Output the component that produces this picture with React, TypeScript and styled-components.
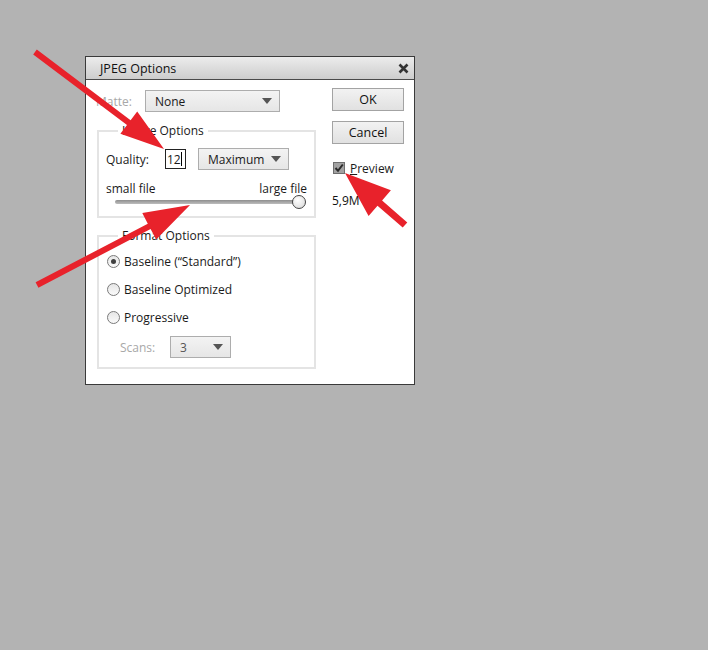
import React from "react";
import styled, { createGlobalStyle } from "styled-components";

const Global = createGlobalStyle`
  html, body { margin: 0; padding: 0; background: #b3b3b3; }
  body { width: 708px; height: 650px; overflow: hidden; font-family: "Open Sans", "Liberation Sans", sans-serif; font-size: 12px; color: #1a1a1a; }
`;

const Page = styled.div`
  position: relative;
  width: 708px;
  height: 650px;
  padding: 56px 0 0 85px;
  box-sizing: border-box;
`;

const Dialog = styled.div`
  width: 330px;
  box-sizing: border-box;
  border: 1px solid #3a3a3a;
  background: #ffffff;
  display: flex;
  flex-direction: column;
`;

const TitleBar = styled.div`
  height: 22px;
  display: flex;
  align-items: center;
  justify-content: space-between;
  padding: 0 5px 0 14px;
  background: linear-gradient(#ececec, #cdcdcd);
  border-bottom: 1px solid #4a4a4a;
  font-size: 12.5px;
  color: #111;
`;

const Close = styled.svg`
  width: 11px;
  height: 11px;
`;

const Body = styled.div`
  display: flex;
  justify-content: space-between;
  padding: 10px 10px 15px 10px;
`;

const LeftCol = styled.div`
  width: 221px;
  display: flex;
  flex-direction: column;
`;

const RightCol = styled.div`
  width: 72px;
  display: flex;
  flex-direction: column;
  margin-top: -2px;
`;

const Row = styled.div<{ $mt?: number; $h?: number; $pl?: number }>`
  display: flex;
  align-items: center;
  height: ${(p) => p.$h ?? 22}px;
  margin-top: ${(p) => p.$mt ?? 0}px;
  padding-left: ${(p) => p.$pl ?? 0}px;
`;

const Label = styled.span<{ $w?: number; $disabled?: boolean }>`
  width: ${(p) => (p.$w ? `${p.$w}px` : "auto")};
  flex: none;
  color: ${(p) => (p.$disabled ? "#a8a8a8" : "#1a1a1a")};
  white-space: nowrap;
`;

const Select = styled.div<{ $w: number; $disabled?: boolean }>`
  width: ${(p) => p.$w}px;
  height: 22px;
  box-sizing: border-box;
  border: 1px solid #adadad;
  background: linear-gradient(#f3f3f3, #e6e6e6);
  display: flex;
  align-items: center;
  justify-content: space-between;
  padding: 0 7px 0 9px;
  color: ${(p) => (p.$disabled ? "#555" : "#1a1a1a")};
`;

const Caret = styled.span`
  width: 0;
  height: 0;
  border-left: 5.5px solid transparent;
  border-right: 5.5px solid transparent;
  border-top: 6px solid #555;
`;

const Group = styled.fieldset<{ $mt: number; $pb: number }>`
  margin: ${(p) => p.$mt}px 0 0 1px;
  padding: 0 7px ${(p) => p.$pb}px 7px;
  border: 2px solid #e4e4e4;
  min-width: 0;
  width: 219px;
  box-sizing: border-box;
`;

const Legend = styled.legend`
  margin-left: 12px;
  padding: 0 4px;
  line-height: 14px;
  color: #1a1a1a;
`;

const QualityInput = styled.div`
  width: 21px;
  height: 20px;
  box-sizing: border-box;
  border: 1px solid #222;
  display: flex;
  align-items: center;
  padding-left: 1px;
  margin-right: 12px;
  background: #fff;
`;

const Cursor = styled.span`
  width: 1px;
  height: 14px;
  background: #000;
`;

const SliderLabels = styled.div`
  display: flex;
  justify-content: space-between;
  height: 14px;
  align-items: center;
  margin-top: 11px;
`;

const SliderRow = styled.div`
  display: flex;
  align-items: center;
  height: 14px;
  padding: 0 1px 0 9px;
`;

const Track = styled.div`
  flex: 1;
  height: 4px;
  border-radius: 2px;
  background: linear-gradient(#8e8e8e, #bdbdbd);
  margin-right: -7px;
`;

const Thumb = styled.div`
  width: 14px;
  height: 14px;
  box-sizing: border-box;
  border-radius: 50%;
  border: 1px solid #444;
  background: radial-gradient(circle at 40% 35%, #ffffff, #d6d6d6);
  position: relative;
`;

const RadioRow = styled.div<{ $mt?: number }>`
  display: flex;
  align-items: center;
  height: 28px;
  gap: 4px;
  margin-top: ${(p) => p.$mt ?? 0}px;
`;

const Radio = styled.span<{ $on?: boolean }>`
  width: 13px;
  height: 13px;
  box-sizing: border-box;
  border-radius: 50%;
  border: 1px solid #7a7a7a;
  background: linear-gradient(#e6e6e6, #fafafa);
  display: flex;
  align-items: center;
  justify-content: center;
  margin-left: 1px;
  &::after {
    content: "";
    width: 5px;
    height: 5px;
    border-radius: 50%;
    background: ${(p) => (p.$on ? "#404040" : "transparent")};
  }
`;

const Button = styled.div<{ $mt: number }>`
  height: 23px;
  box-sizing: border-box;
  border: 1px solid #a3a3a3;
  background: linear-gradient(#f2f2f2, #e1e1e1);
  display: flex;
  align-items: center;
  justify-content: center;
  margin-top: ${(p) => p.$mt}px;
  font-size: 12.5px;
  color: #111;
`;

const CheckRow = styled.div`
  display: flex;
  align-items: center;
  gap: 5px;
  height: 14px;
  margin-top: 17px;
  margin-left: 1px;
`;

const CheckBox = styled.span`
  width: 12px;
  height: 12px;
  box-sizing: border-box;
  border: 1px solid #6e6e6e;
  background: #a2a2a2;
  display: flex;
  align-items: center;
  justify-content: center;
`;

const Under = styled.span`
  text-decoration: underline;
`;

const Size = styled.div`
  height: 14px;
  display: flex;
  align-items: center;
  margin-top: 18px;
  color: #111;
`;

const Overlay = styled.svg`
  position: absolute;
  left: 0;
  top: 0;
  width: 708px;
  height: 650px;
  pointer-events: none;
`;

type P = [number, number];
function arrow(tail: P, tip: P, shaft: number, headLen: number, headW: number) {
  const dx = tip[0] - tail[0];
  const dy = tip[1] - tail[1];
  const len = Math.hypot(dx, dy);
  const ux = dx / len;
  const uy = dy / len;
  const nx = -uy;
  const ny = ux;
  const bx = tip[0] - ux * headLen;
  const by = tip[1] - uy * headLen;
  const pts: P[] = [
    [tail[0] + (nx * shaft) / 2, tail[1] + (ny * shaft) / 2],
    [bx + (nx * shaft) / 2, by + (ny * shaft) / 2],
    [bx + (nx * headW) / 2, by + (ny * headW) / 2],
    tip,
    [bx - (nx * headW) / 2, by - (ny * headW) / 2],
    [bx - (nx * shaft) / 2, by - (ny * shaft) / 2],
    [tail[0] - (nx * shaft) / 2, tail[1] - (ny * shaft) / 2],
  ];
  return pts.map((p) => `${p[0].toFixed(1)},${p[1].toFixed(1)}`).join(" ");
}

export default function App() {
  return (
    <>
      <Global />
      <Page>
        <Dialog>
          <TitleBar>
            <span>JPEG Options</span>
            <Close viewBox="0 0 11 11">
              <path d="M1.5 1.5 L9.5 9.5 M9.5 1.5 L1.5 9.5" stroke="#333" strokeWidth="2.6" />
            </Close>
          </TitleBar>
          <Body>
            <LeftCol>
              <Row>
                <Label $w={49} $disabled>Matte:</Label>
                <Select $w={135}>
                  <span>None</span>
                  <Caret />
                </Select>
              </Row>
              <Group $mt={12} $pb={7}>
                <Legend>Image Options</Legend>
                <Row $mt={10}>
                  <Label $w={59}>Quality:</Label>
                  <QualityInput>
                    <span>12</span>
                    <Cursor />
                  </QualityInput>
                  <Select $w={91}>
                    <span>Maximum</span>
                    <Caret />
                  </Select>
                </Row>
                <SliderLabels>
                  <span>small file</span>
                  <span>large file</span>
                </SliderLabels>
                <SliderRow>
                  <Track />
                  <Thumb />
                </SliderRow>
              </Group>
              <Group $mt={11} $pb={9}>
                <Legend>Format Options</Legend>
                <RadioRow $mt={4}>
                  <Radio $on />
                  <span>Baseline (“Standard”)</span>
                </RadioRow>
                <RadioRow>
                  <Radio />
                  <span>Baseline Optimized</span>
                </RadioRow>
                <RadioRow>
                  <Radio />
                  <span>Progressive</span>
                </RadioRow>
                <Row $mt={5} $pl={14}>
                  <Label $w={50} $disabled>Scans:</Label>
                  <Select $w={61} $disabled>
                    <span>3</span>
                    <Caret />
                  </Select>
                </Row>
              </Group>
            </LeftCol>
            <RightCol>
              <Button $mt={0}>OK</Button>
              <Button $mt={10}>Cancel</Button>
              <CheckRow>
                <CheckBox>
                  <svg width="10" height="10" viewBox="0 0 10 10">
                    <path d="M1.5 5 L4 7.8 L8.8 1.5" fill="none" stroke="#2a2a2a" strokeWidth="2" />
                  </svg>
                </CheckBox>
                <span>
                  <Under>P</Under>review
                </span>
              </CheckRow>
              <Size>5,9M</Size>
            </RightCol>
          </Body>
        </Dialog>
        <Overlay viewBox="0 0 708 650">
          <polygon points={arrow([35, 52], [164, 149], 6, 44, 28)} fill="#e8222b" />
          <polygon points={arrow([37, 285], [190, 205], 6, 46, 30)} fill="#e8222b" />
          <polygon points={arrow([405, 225], [345, 173], 7, 46, 34)} fill="#e8222b" />
        </Overlay>
      </Page>
    </>
  );
}
